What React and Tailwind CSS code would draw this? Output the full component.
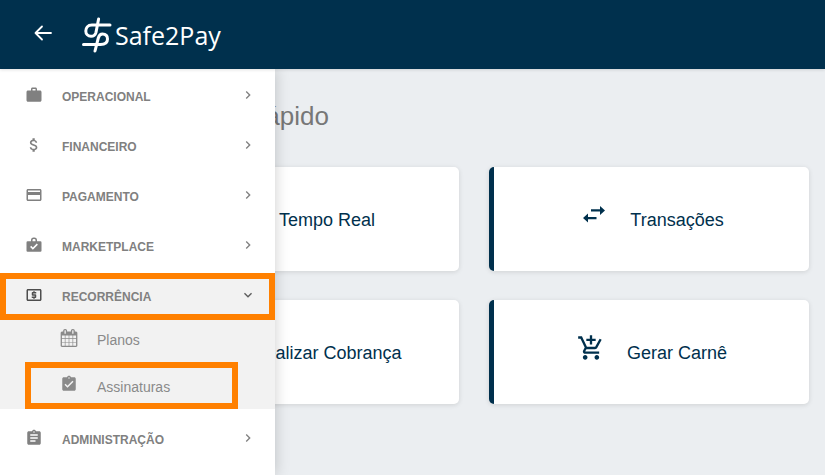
import {
  MdAddShoppingCart,
  MdAssignment,
  MdAssignmentTurnedIn,
  MdAttachMoney,
  MdCreditCard,
  MdKeyboardArrowDown,
  MdKeyboardArrowRight,
  MdLocalAtm,
  MdReceipt,
  MdTimer,
  MdWork,
} from "react-icons/md";

function CaseCheckIcon({ className }) {
  return (
    <svg viewBox="0 0 24 24" fill="currentColor" className={className}>
      <path
        fillRule="evenodd"
        d="M8 7V5.5A3.5 3.5 0 0 1 11.5 2h1A3.5 3.5 0 0 1 16 5.5V7h4.5A1.5 1.5 0 0 1 22 8.5v11a1.5 1.5 0 0 1-1.5 1.5h-17A1.5 1.5 0 0 1 2 19.5v-11A1.5 1.5 0 0 1 3.5 7H8zm2 0h4V5.5A1.5 1.5 0 0 0 12.5 4h-1A1.5 1.5 0 0 0 10 5.5V7zm.5 11.3 6.7-6.7-1.5-1.5-5.2 5.2-2.2-2.2-1.5 1.5 3.7 3.7z"
      />
    </svg>
  );
}

function SwapIcon({ className }) {
  return (
    <svg viewBox="0 0 28 28" fill="currentColor" className={className}>
      <path d="M20 5l5 4.500-5 4.500v-3.500h-9v-2.200h9zM8 12.500v3.500h8.500v2.200H8v3.300L3 17z" />
    </svg>
  );
}

function CalendarIcon({ className }) {
  return (
    <svg viewBox="0 0 1664 1792" fill="currentColor" className={className}>
      <path d="M128 1664h288v-288h-288v288zm352 0h320v-288h-320v288zm-352-352h288v-320h-288v320zm352 0h320v-320h-320v320zm-352-384h288v-288h-288v288zm736 736h320v-288h-320v288zm-384-736h320v-288h-320v288zm768 736h288v-288h-288v288zm-384-352h320v-320h-320v320zm-352-864v-288q0-13-9.5-22.5t-22.5-9.5h-64q-13 0-22.5 9.5t-9.5 22.5v288q0 13 9.5 22.5t22.5 9.5h64q13 0 22.5-9.5t9.5-22.5zm736 864h288v-320h-288v320zm-384-384h320v-288h-320v288zm384 0h288v-288h-288v288zm32-480v-288q0-13-9.5-22.5t-22.5-9.5h-64q-13 0-22.5 9.5t-9.5 22.5v288q0 13 9.5 22.5t22.5 9.5h64q13 0 22.5-9.5t9.5-22.5zm384-64v1280q0 52-38 90t-90 38h-1408q-52 0-90-38t-38-90v-1280q0-52 38-90t90-38h128v-96q0-66 47-113t113-47h64q66 0 113 47t47 113v96h384v-96q0-66 47-113t113-47h64q66 0 113 47t47 113v96h128q52 0 90 38t38 90z" />
    </svg>
  );
}

function Logo() {
  return (
    <a href="#" className="flex items-center gap-[3px] text-white">
      <svg
        viewBox="0 0 30 36"
        className="h-9 w-[30px]"
        fill="none"
        stroke="currentColor"
        strokeWidth="3"
        strokeLinecap="round"
      >
        <path d="M28 8H10C5.500 8 3.800 11 3.800 14S6 19.300 9 19.300c3 0 4.300-1.500 5-4L16.600 2" />
        <path d="M1.500 27.500H18.500c5 0 7-2.500 7-5.500s-1.500-5-5-5c-2.500 0-3.500 1.300-4.200 4L13 34" />
      </svg>
      <span className="font-['Open_Sans',sans-serif] text-[25px] leading-9 font-medium">Safe2Pay</span>
    </a>
  );
}

const menu = [
  { label: "OPERACIONAL", icon: MdWork },
  { label: "FINANCEIRO", icon: MdAttachMoney },
  { label: "PAGAMENTO", icon: MdCreditCard },
  { label: "MARKETPLACE", icon: CaseCheckIcon },
];

const shortcuts = [
  { label: "Tempo Real", icon: MdTimer },
  { label: "Transações", icon: SwapIcon },
  { label: "Realizar Cobrança", icon: MdReceipt },
  { label: "Gerar Carnê", icon: MdAddShoppingCart },
];

function MenuItem({ label, icon: Icon }) {
  return (
    <button className="flex h-[50px] w-full items-center pr-[19px] pb-1 pl-[25px] text-[#808080]">
      <Icon className="size-[18px]" />
      <span className="flex-1 pt-1 pl-[19px] text-left text-xs font-bold">{label}</span>
      <MdKeyboardArrowRight className="size-4" />
    </button>
  );
}

function Sidebar() {
  return (
    <nav className="absolute inset-y-0 left-0 w-[275px] bg-white pt-[3px] shadow-[0_0_14px_rgba(0,0,0,0.2)]">
      {menu.map((item) => (
        <MenuItem key={item.label} {...item} />
      ))}

      <div className="mt-px bg-[#f2f2f2]">
        <button
          aria-expanded="true"
          className="flex h-[47px] w-full items-center border-[6px] border-[#ff8000] pr-[13px] pb-1 pl-[19px] text-[#808080]"
        >
          <MdLocalAtm className="size-[18px] text-[#4d4d4d]" />
          <span className="flex-1 pt-1 pl-[19px] text-left text-xs font-bold">RECORRÊNCIA</span>
          <MdKeyboardArrowDown className="size-4 text-[#5c5c5c]" />
        </button>
        <a href="#" className="flex h-[42px] items-center pb-1 pl-[60px] text-sm text-[#8a8a8a]">
          <CalendarIcon className="mb-0.5 size-[18px]" />
          <span className="pt-0.5 pl-[19px]">Planos</span>
        </a>
        <a
          href="#"
          className="mr-[37px] ml-[25px] flex h-[47px] items-center border-[6px] border-[#ff8000] pb-1 pl-[29px] text-sm text-[#8a8a8a]"
        >
          <MdAssignmentTurnedIn className="size-[18px]" />
          <span className="pt-1.5 pl-[19px]">Assinaturas</span>
        </a>
      </div>

      <div className="pt-[6px]">
        <MenuItem label="ADMINISTRAÇÃO" icon={MdAssignment} />
      </div>
    </nav>
  );
}

function ShortcutCard({ label, icon: Icon }) {
  return (
    <button className="flex h-[104px] items-center justify-center gap-[22px] rounded-[5px] border-l-[5px] border-[#00304d] bg-white pt-0.5 pl-px text-lg text-[#00304d] shadow-[0_1px_5px_rgba(0,0,0,0.12)]">
      <Icon className="mb-2.5 size-7" />
      <span>{label}</span>
    </button>
  );
}

export default function App() {
  return (
    <div className="flex min-h-screen flex-col bg-[#ebeef1] font-['Liberation_Sans',Arial,sans-serif]">
      <header className="z-10 flex h-[69px] items-center gap-7 bg-[#00304d] pl-[34px] shadow-[0_1px_3px_rgba(0,0,0,0.12)]">
        <button aria-label="Voltar" className="pb-1 text-white">
          <svg
            viewBox="0 0 20 16"
            className="h-4 w-5"
            fill="none"
            stroke="currentColor"
            strokeWidth="1.8"
            strokeLinecap="round"
            strokeLinejoin="round"
          >
            <path d="M8 1.500 1.500 8 8 14.500M1.500 8H17" />
          </svg>
        </button>
        <Logo />
      </header>

      <div className="relative flex-1">
        <main className="pt-[27px] pr-4 pl-[139px]">
          <h1 className="pl-[15px] text-[26px] leading-10 text-[#777]">Acesso Rápido</h1>
          <div className="grid grid-cols-2 gap-x-[30px] gap-y-[29px] pt-[31px]">
            {shortcuts.map((item) => (
              <ShortcutCard key={item.label} {...item} />
            ))}
          </div>
        </main>
        <Sidebar />
      </div>
    </div>
  );
}
